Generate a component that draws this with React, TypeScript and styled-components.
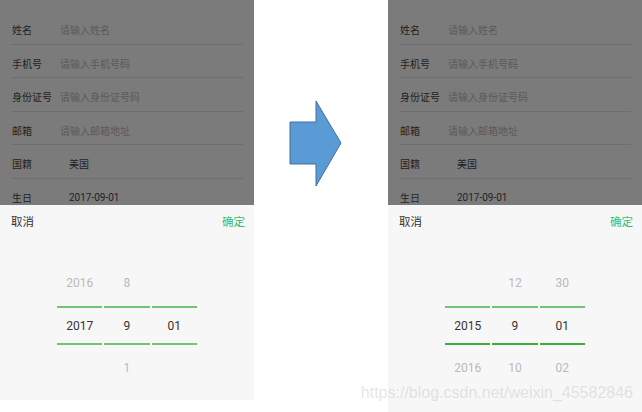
import React from "react";
import styled, { createGlobalStyle } from "styled-components";

const GlobalStyle = createGlobalStyle`
  html, body {
    margin: 0;
    padding: 0;
    background: #fff;
  }
  body {
    font-family: "Roboto", "Noto Sans CJK SC", sans-serif;
  }
`;

type Field = { label: string; value: string; filled?: boolean };

const fields: Field[] = [
  { label: "姓名", value: "请输入姓名" },
  { label: "手机号", value: "请输入手机号码" },
  { label: "身份证号", value: "请输入身份证号码" },
  { label: "邮箱", value: "请输入邮箱地址" },
  { label: "国籍", value: "美国", filled: true },
  { label: "生日", value: "2017-09-01", filled: true },
];

type Wheel = [string, string, string];

const before: Wheel[] = [
  ["2016", "2017", ""],
  ["8", "9", "1"],
  ["", "01", ""],
];

const after: Wheel[] = [
  ["", "2015", "2016"],
  ["12", "9", "10"],
  ["30", "01", "02"],
];

function Screen({ wheels, tall }: { wheels: Wheel[]; tall?: boolean }) {
  return (
    <Panel $tall={tall}>
      <Form>
        {fields.map((f) => (
          <Row key={f.label}>
            <Label>{f.label}</Label>
            <Value $filled={f.filled}>{f.value}</Value>
          </Row>
        ))}
      </Form>
      <Picker>
        <Header>
          <HeaderBtn>取消</HeaderBtn>
          <HeaderBtn $primary>确定</HeaderBtn>
        </Header>
        <Wheels>
          {wheels.map((w, i) => (
            <Column key={i}>
              <Item>{w[0]}</Item>
              <Selected $strong={tall}>{w[1]}</Selected>
              <Item>{w[2]}</Item>
            </Column>
          ))}
        </Wheels>
      </Picker>
    </Panel>
  );
}

export default function App() {
  return (
    <>
      <GlobalStyle />
      <Page>
        <Screen wheels={before} />
        <Middle>
          <svg width="134" height="412" viewBox="0 0 134 412">
            <polygon
              points="36,122 62,122 62,101 87,143 62,186 62,164 36,164"
              fill="#5b9bd5"
              stroke="#41719c"
              strokeWidth="1"
            />
          </svg>
        </Middle>
        <Screen wheels={after} tall />
        <Watermark>https://blog.csdn.net/weixin_45582846</Watermark>
      </Page>
    </>
  );
}

const Page = styled.div`
  position: relative;
  display: flex;
  width: 642px;
  height: 412px;
  overflow: hidden;
  background: #fff;
`;

const Panel = styled.div<{ $tall?: boolean }>`
  width: 254px;
  height: ${(p) => (p.$tall ? "412px" : "400px")};
  display: flex;
  flex-direction: column;
  background: #f7f7f7;
  overflow: hidden;
`;

const Middle = styled.div`
  width: 134px;
  flex-shrink: 0;
  svg {
    display: block;
  }
`;

const Form = styled.div`
  height: 205px;
  flex-shrink: 0;
  box-sizing: border-box;
  padding: 11px 11px 0;
  background: #7b7b7b;
  overflow: hidden;
`;

const Row = styled.div`
  height: 33.5px;
  box-sizing: border-box;
  display: flex;
  align-items: center;
  border-bottom: 1px solid #6e6e6e;
  padding: 5px 0 0 1px;
  font-size: 10px;
`;

const Label = styled.span`
  width: 48px;
  color: #1f1f1f;
  font-family: "Noto Sans CJK SC", sans-serif;
`;

const Value = styled.span<{ $filled?: boolean }>`
  color: ${(p) => (p.$filled ? "#1f1f1f" : "#5a5a5a")};
  padding-left: ${(p) => (p.$filled ? "9px" : "0")};
  font-family: "Roboto", "Noto Sans CJK SC", sans-serif;
`;

const Picker = styled.div`
  flex: 1;
  display: flex;
  flex-direction: column;
`;

const Header = styled.div`
  height: 32px;
  display: flex;
  align-items: center;
  justify-content: space-between;
  padding: 0 9px 0 11px;
`;

const HeaderBtn = styled.span<{ $primary?: boolean }>`
  font-size: 11.5px;
  color: ${(p) => (p.$primary ? "#35bd74" : "#333")};
  font-family: "Noto Sans CJK SC", sans-serif;
`;

const Wheels = styled.div`
  display: flex;
  justify-content: center;
  gap: 2px;
  padding-top: 23px;
`;

const Column = styled.div`
  width: 45.3px;
  display: flex;
  flex-direction: column;
`;

const Item = styled.div`
  height: 46px;
  display: flex;
  align-items: center;
  justify-content: center;
  font-size: 12px;
  color: #b9b9b9;
`;

const Selected = styled.div<{ $strong?: boolean }>`
  height: 35px;
  display: flex;
  align-items: center;
  justify-content: center;
  font-size: 12px;
  color: #333;
  border-top: 2px solid #74c274;
  border-bottom: 2px solid ${(p) => (p.$strong ? "#3fae3f" : "#74c274")};
`;

const Watermark = styled.div`
  position: absolute;
  right: 9px;
  bottom: 10px;
  font-family: "Liberation Sans", Arial, sans-serif;
  font-size: 16px;
  color: rgba(190, 190, 190, 0.4);
  pointer-events: none;
`;
